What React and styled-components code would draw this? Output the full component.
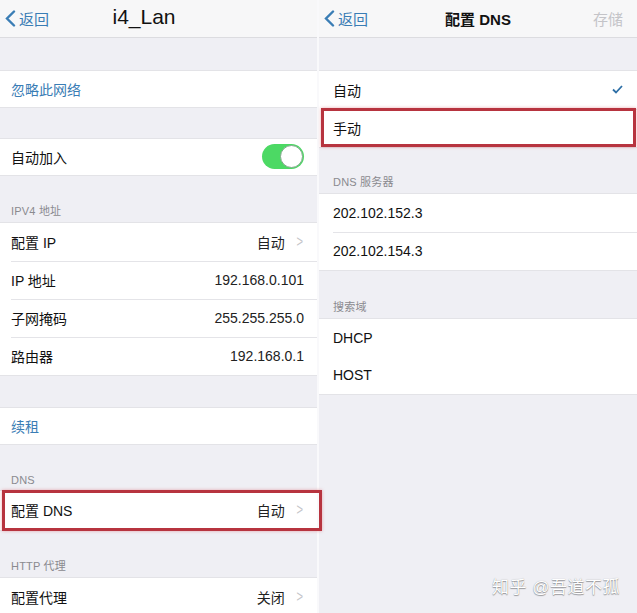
import React from 'react'
import styled, { createGlobalStyle } from 'styled-components'

const GlobalStyle = createGlobalStyle`
    html, body {
        margin: 0;
        padding: 0;
        background: #efeff4;
    }
    body {
        font-family: "Liberation Sans", "Noto Sans CJK SC", sans-serif;
        -webkit-font-smoothing: antialiased;
    }
`

const Screen = styled.div`
    position: relative;
    display: grid;
    grid-template-columns: 317px 2px 318px;
    width: 637px;
    height: 613px;
    overflow: hidden;
    background: #efeff4;
`

const Divider = styled.div`
    background: #f9f9fb;
`

const Panel = styled.div`
    --pad: ${p => p.pad}px;
    --end: ${p => p.end}px;
    display: flex;
    flex-direction: column;
    background: #efeff4;
`

const NavBar = styled.div`
    display: grid;
    grid-template-columns: 1fr auto 1fr;
    align-items: center;
    height: 37px;
    padding: 0 14px 0 5px;
    background: #f7f7f8;
    border-bottom: 1px solid #dcdce0;
`

const Back = styled.div`
    display: flex;
    align-items: center;
    gap: 3px;
    color: #3a7db5;
    font-size: 15px;
    svg {
        width: 11px;
        height: 17px;
    }
`

const Title = styled.div`
    color: #111;
    font-size: ${p => p.big ? '21px' : '15px'};
    font-weight: ${p => p.big ? 400 : 600};
    margin: ${p => p.big ? '-4px 20px 0 0' : '0 0 0 9px'};
`

const Save = styled.div`
    justify-self: end;
    color: #c4c4c8;
    font-size: 15px;
`

const GroupHead = styled.div`
    display: flex;
    align-items: flex-end;
    height: ${p => p.top}px;
    padding: 0 0 4px var(--pad);
    box-sizing: border-box;
    color: #8a8a8f;
    font-size: 11px;
    letter-spacing: 0.2px;
`

const Group = styled.div`
    background: #fff;
    border-top: 1px solid #e3e3e7;
    border-bottom: 1px solid #e3e3e7;
`

const Row = styled.div`
    position: relative;
    display: flex;
    align-items: center;
    height: ${p => p.h || 38}px;
    padding: 0 var(--end) 1px var(--pad);
    box-sizing: border-box;
    font-size: 14px;
    color: ${p => p.link ? '#3a7db5' : '#111'};
    & + & > .line {
        display: block;
    }
`

const Line = styled.span`
    display: none;
    position: absolute;
    top: 0;
    left: var(--pad);
    right: 0;
    border-top: 1px solid #e4e4e8;
`

const Label = styled.span`
    flex: 1;
`

const Value = styled.span`
    color: #222;
`

const Chevron = styled.span`
    margin: 0 0 0 10px;
    color: #c4c4c9;
    font-size: 16px;
    transform: scaleX(0.7);
`

const Mark = styled.div`
    position: absolute;
    top: ${p => p.top}px;
    left: ${p => p.left}px;
    width: ${p => p.w}px;
    height: ${p => p.h}px;
    border: 3px solid #b7343f;
    box-sizing: border-box;
    box-shadow: 0 0 3px rgba(220, 90, 100, 0.5);
    pointer-events: none;
`

const Toggle = styled.div`
    position: relative;
    width: 42px;
    height: 25px;
    border-radius: 13px;
    background: #4cd964;
    &::after {
        content: '';
        position: absolute;
        top: 1px;
        right: 1px;
        width: 23px;
        height: 23px;
        border-radius: 50%;
        background: #fff;
        box-sizing: border-box;
        border: 1px solid #7fa88a;
    }
`

const Check = styled.svg`
    width: 11px;
    height: 9px;
`

const Watermark = styled.div`
    position: absolute;
    right: 17px;
    bottom: 15px;
    color: #fff;
    font-size: 17px;
    letter-spacing: 0.5px;
    text-shadow: 0 1px 1px rgba(0, 0, 0, 0.35), 0 0 1px rgba(0, 0, 0, 0.3);
`

const BackButton = () => (
    <Back>
        <svg viewBox="0 0 11 17">
            <path d="M9 1.5 L2 8.5 L9 15.5" fill="none" stroke="#3a7db5" strokeWidth="2.4" strokeLinecap="round" />
        </svg>
        返回
    </Back>
)

const Item = ({ label, value, chevron, link, h, children }) => (
    <Row link={link} h={h}>
        <Line className="line" />
        <Label>{label}</Label>
        {value && <Value>{value}</Value>}
        {chevron && <Chevron>&gt;</Chevron>}
        {children}
    </Row>
)

export default function App () {
    return (
        <>
            <GlobalStyle />
            <Screen>
                <Panel pad={11} end={13}>
                    <NavBar>
                        <BackButton />
                        <Title big>i4_Lan</Title>
                        <span />
                    </NavBar>
                    <GroupHead top={32} />
                    <Group>
                        <Item label="忽略此网络" link h={36} />
                    </Group>
                    <GroupHead top={30} />
                    <Group>
                        <Item label="自动加入" h={36}>
                            <Toggle />
                        </Item>
                    </Group>
                    <GroupHead top={46}>IPV4 地址</GroupHead>
                    <Group>
                        <Item label="配置 IP" value="自动" chevron />
                        <Item label="IP 地址" value="192.168.0.101" />
                        <Item label="子网掩码" value="255.255.255.0" />
                        <Item label="路由器" value="192.168.0.1" />
                    </Group>
                    <GroupHead top={31} />
                    <Group>
                        <Item label="续租" link h={36} />
                    </Group>
                    <GroupHead top={45}>DNS</GroupHead>
                    <Group>
                        <Item label="配置 DNS" value="自动" chevron h={39} />
                    </Group>
                    <GroupHead top={46}>HTTP 代理</GroupHead>
                    <Group>
                        <Item label="配置代理" value="关闭" chevron />
                    </Group>
                </Panel>
                <Divider />
                <Panel pad={14} end={14}>
                    <NavBar>
                        <BackButton />
                        <Title>配置 DNS</Title>
                        <Save>存储</Save>
                    </NavBar>
                    <GroupHead top={32} />
                    <Group>
                        <Item label="自动">
                            <Check viewBox="0 0 11 9">
                                <path d="M1 4.5 L4 7.5 L10 1" fill="none" stroke="#2d6fa6" strokeWidth="1.8" />
                            </Check>
                        </Item>
                        <Item label="手动" />
                    </Group>
                    <GroupHead top={45}>DNS 服务器</GroupHead>
                    <Group>
                        <Item label="202.102.152.3" />
                        <Item label="202.102.154.3" />
                    </Group>
                    <GroupHead top={47}>搜索域</GroupHead>
                    <Group>
                        <Item label="DHCP" />
                        <Item label="HOST" h={37} />
                    </Group>
                </Panel>
                <Mark top={490} left={2} w={320} h={41} />
                <Mark top={108} left={321} w={315} h={39} />
                <Watermark>知乎 @吾道不孤</Watermark>
            </Screen>
        </>
    )
}
